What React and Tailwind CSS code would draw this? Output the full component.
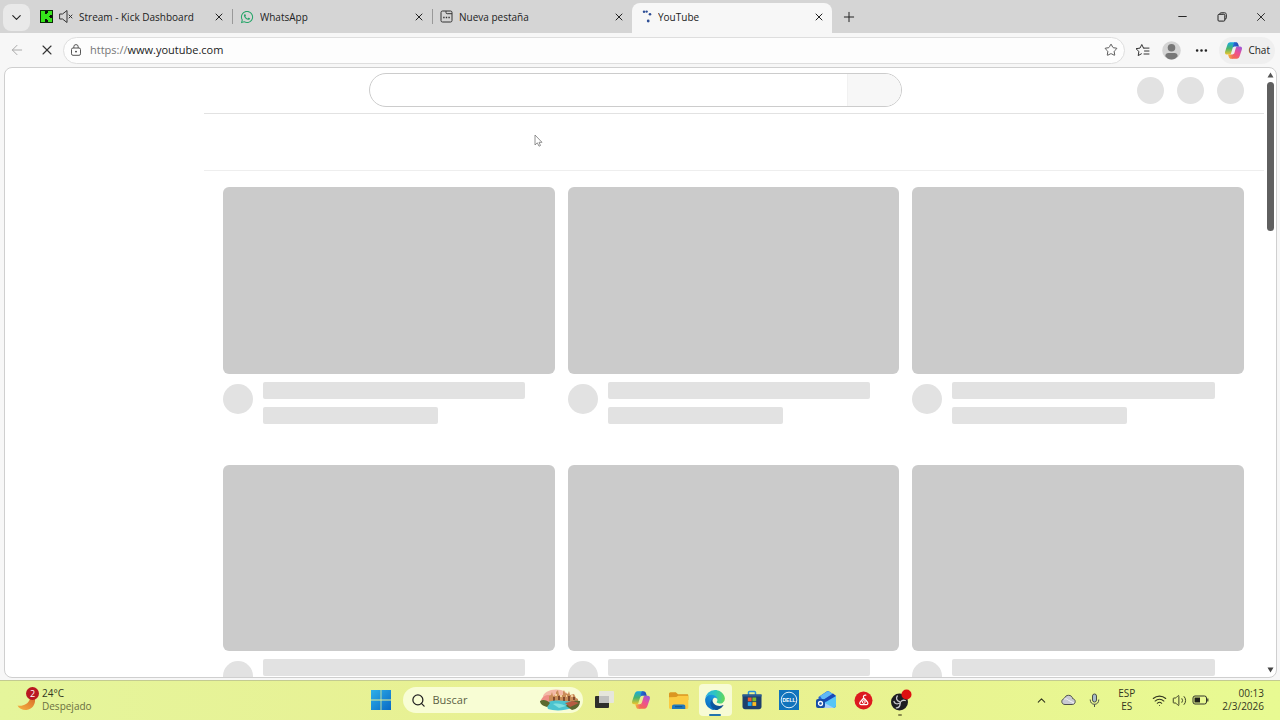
import {
  ChevronDown,
  ChevronUp,
  ArrowLeft,
  X,
  Plus,
  Minus,
  Star,
  Search,
  Wifi,
  Volume2,
  Ellipsis
} from "lucide-react";
import { FaWhatsapp } from "react-icons/fa";

const KickIcon = () => (
  <svg width="13" height="13" viewBox="0 0 13 13" aria-hidden="true">
    <rect width="13" height="13" fill="#35e51a" />
    <path d="M0 0h13v1H0ZM0 12h13v1H0ZM0 0h1v13H0ZM12 0h1v13h-1Z" fill="#0b2a08" />
    <path d="M5 1h3v2H7v1H5ZM5 9h2v1h1v2H5ZM10 5h2v3h-2V7H9V6h1Z" fill="#0b0f0a" />
  </svg>
);

const MutedIcon = () => (
  <svg width="14" height="15" viewBox="0 0 14 15" fill="none" stroke="#333" strokeLinejoin="round" strokeLinecap="round" aria-hidden="true">
    <path d="M1 5h2.500L8 1.500v12L3.500 10H1Z" />
    <path d="m10 6 3 3M13 6l-3 3" />
  </svg>
);

const NewTabIcon = () => (
  <svg width="13" height="13" viewBox="0 0 13 13" fill="none" stroke="#333" aria-hidden="true">
    <rect x="1" y="1" width="11" height="11" rx="1.500" />
    <path d="M6 1.200v1.300c0 .8.4 1.200 1.200 1.200H12" />
    <path d="M3.200 7.500h6.600" strokeWidth="1.300" strokeDasharray="1.4 1.200" />
  </svg>
);

const SpinnerDots = () => (
  <svg width="13" height="13" viewBox="0 0 13 13" fill="#2f4f96" aria-hidden="true">
    <circle cx="5" cy="1.700" r="1.200" />
    <circle cx="7.600" cy="1.600" r="1.200" />
    <circle cx="11" cy="4.200" r="1.300" />
    <circle cx="9.200" cy="11" r="1.400" />
  </svg>
);

const LockIcon = () => (
  <svg width="12" height="12" viewBox="0 0 12 12" fill="none" stroke="#555" aria-hidden="true">
    <rect x="1.500" y="4" width="9" height="7.300" rx="1.500" />
    <path d="M3.800 4V2.800a2.200 2.200 0 0 1 4.400 0V4" />
    <circle cx="6" cy="7.600" r=".9" fill="#333" stroke="none" />
  </svg>
);

const FavoritesIcon = () => (
  <svg width="15" height="15" viewBox="0 0 15 15" fill="none" stroke="#333" strokeLinejoin="round" strokeLinecap="round" aria-hidden="true">
    <path d="M8.800 5.100H8.500L6.800 1.500 5 5.100l-4 .6 2.900 2.800-.7 4.100 3.200-1.800" />
    <path d="M8.800 5.100H14M9.500 8H14M9 11h5" />
  </svg>
);

const RestoreIcon = () => (
  <svg width="10" height="10" viewBox="0 0 10 10" fill="none" stroke="#222" aria-hidden="true">
    <rect x="1" y="2.300" width="6.800" height="6.800" rx="1" />
    <path d="M2.800 2.200C2.800 1.200 3.400.8 4.200.8h3.300C8.700.8 9.300 1.500 9.300 2.600v3.200c0 .9-.5 1.400-1.400 1.400" />
  </svg>
);

const ProfileIcon = () => (
  <svg width="19" height="19" viewBox="0 0 19 19" aria-hidden="true">
    <circle cx="9.500" cy="9.500" r="9.300" fill="#d4d4d4" />
    <circle cx="9.500" cy="6.800" r="3.800" fill="#777" />
    <path d="M3.300 15.200c0-2 1.400-3.200 3.200-3.200h6c1.800 0 3.200 1.200 3.200 3.200-1.500 2-3.700 3.300-6.200 3.300s-4.700-1.300-6.200-3.300Z" fill="#777" />
  </svg>
);

const CopilotIcon = ({ id, size }) => (
  <svg width={size} height={size} viewBox="0 0 20 20" aria-hidden="true">
    <defs>
      <linearGradient id={`${id}-blue`} x1="0" y1="0" x2="1" y2="0">
        <stop offset="0" stopColor="#2472de" />
        <stop offset="1" stopColor="#2446ad" />
      </linearGradient>
      <linearGradient id={`${id}-green`} x1="0.2" y1="0" x2="0.2" y2="1">
        <stop offset="0" stopColor="#16a9e6" />
        <stop offset=".5" stopColor="#48b56c" />
        <stop offset="1" stopColor="#f0c52c" />
      </linearGradient>
      <linearGradient id={`${id}-pink`} x1="0.8" y1="0" x2="0.3" y2="1">
        <stop offset="0" stopColor="#a058d8" />
        <stop offset=".5" stopColor="#ec4f93" />
        <stop offset="1" stopColor="#f56b4a" />
      </linearGradient>
      <linearGradient id={`${id}-warm`} x1="0" y1="0" x2="1" y2="0">
        <stop offset="0" stopColor="#f7b733" />
        <stop offset="1" stopColor="#ee4e6b" />
      </linearGradient>
    </defs>
    <path d="M12.500 1.200H6.700C4.800 1.200 4 2.500 3.400 4.400L1.200 11c-.6 2 .2 3.300 2.100 3.300h2.200c1.400 0 1.900-.8 2.200-2.200l1.600-5.400c.5-1.600 1.200-4.900 3.200-5.500Z" fill={`url(#${id}-green)`} />
    <path d="M7.500 18.800h5.800c1.900 0 2.700-1.300 3.300-3.200L18.800 9c.6-2-.2-3.300-2.100-3.300h-2.200c-1.400 0-1.900.8-2.200 2.200l-1.600 5.400c-.5 1.600-1.200 4.900-3.200 5.500Z" fill={`url(#${id}-pink)`} />
    <path d="M11 1.200h1.500c1.300 0 2 .7 2.400 1.900l.9 2.700h-2.600c-1.600 0-3.200-.3-4.200 1.700C9.500 5 9.700 2.500 11 1.200Z" fill={`url(#${id}-blue)`} />
    <path d="M9 18.800H7.500c-1.300 0-2-.7-2.400-1.900l-.9-2.700h2.600c1.600 0 3.200.3 4.200-1.700-.5 2.500-.7 5-2 6.300Z" fill={`url(#${id}-warm)`} />
  </svg>
);

const WindowsIcon = () => (
  <svg width="20" height="20" viewBox="0 0 20 20" aria-hidden="true">
    <defs>
      <linearGradient id="win" gradientUnits="userSpaceOnUse" x1="0" y1="0" x2="20" y2="20">
        <stop offset="0" stopColor="#2fb0ea" />
        <stop offset="1" stopColor="#0869c4" />
      </linearGradient>
    </defs>
    <path d="M0 0h9.600v9.600H0zM10.400 0H20v9.600h-9.600zM0 10.400h9.600V20H0zM10.400 10.400H20V20h-9.600z" fill="url(#win)" />
  </svg>
);

const CityIcon = () => (
  <svg width="40" height="22" viewBox="0 0 40 22" aria-hidden="true">
    <ellipse cx="16" cy="8" rx="13" ry="7.500" fill="#f3b9a6" />
    <path d="M1 11C3 6 9 5 12 7l4 5-14 3Z" fill="#ef8f86" />
    <path d="M9 12V7l2-1 1-3 1 4 3-1V3l2-2 1 5h4V3l1-2 1 3 3 1 1-3 1 4 4-1 2 4 2 1v4l-12 2Z" fill="#c98d58" />
    <path d="M13 8h2v4h-2zM18 7h2v4h-2zM23 8h2v4h-2zM28 7h2v5h-2zM33 8h2v3h-2z" fill="#7f4b2e" />
    <path d="M15 5h2v2h-2zM20 6h2v2h-2zM26 6h1v2h-1zM31 6h2v2h-2z" fill="#f1d0a0" />
    <path d="M6 14c8-4 18-2 27-1l-1 6c-8 3-18 3-24 1Z" fill="#4bc3cf" />
    <path d="M13 15c5-1 9 0 13 2l-7 2Z" fill="#83e0df" />
    <path d="M0 12c3-2 7-1 10 2l-3 4c-4-1-7-3-7-6ZM26 17c3-5 9-6 14-5 0 5-3 8-8 9Z" fill="#5c6930" />
    <path d="M25 14l8-2 6 2-9 4Z" fill="#b65c41" />
  </svg>
);

const TaskViewIcon = () => (
  <svg width="20" height="20" viewBox="0 0 20 20" aria-hidden="true">
    <rect x="1" y="6" width="14" height="12" rx="1" fill="#2e2e2b" />
    <rect x="5" y="1" width="15" height="12" rx="1" fill="#e5e5e3" opacity=".92" />
    <rect x="5" y="6" width="10" height="7" fill="#c1c1bf" />
  </svg>
);

const FolderIcon = () => (
  <svg width="21" height="19" viewBox="0 0 21 19" aria-hidden="true">
    <path d="M1 3c0-1 .6-1.700 1.600-1.700h5.200L10 3.300h9c.9 0 1.300.5 1.300 1.400V9H1Z" fill="#db9621" />
    <path d="M1 6.200 8.300 6l1.800-1.300H19c.9 0 1.300.5 1.300 1.300v10.600c0 .8-.5 1.300-1.300 1.300H2.300c-.8 0-1.300-.5-1.300-1.300Z" fill="#fbcb42" />
    <path d="M4 18v-2.500c0-1.300.8-2.100 2-2.100h9.300c1.300 0 2 .8 2 2.100V18Z" fill="#2179bd" />
    <path d="M7 15.700h7.300" stroke="#14578e" strokeWidth="1.200" />
  </svg>
);

const EdgeIcon = () => (
  <svg width="20" height="20" viewBox="4 0 257 259" aria-hidden="true">
    <defs>
      <linearGradient id="edge-deep" x1="0.1" y1="0.600" x2="1" y2="0.600">
        <stop offset="0" stopColor="#0c59a4" />
        <stop offset="1" stopColor="#114a8b" />
      </linearGradient>
      <linearGradient id="edge-mid" x1="0.900" y1="0.200" x2="0.300" y2="1">
        <stop offset="0" stopColor="#1b9de2" />
        <stop offset="1" stopColor="#0a6cc0" />
      </linearGradient>
      <linearGradient id="edge-wave" x1="0" y1="0.400" x2="1" y2="0.500">
        <stop offset="0" stopColor="#2aaee6" />
        <stop offset=".5" stopColor="#2fc6bd" />
        <stop offset="1" stopColor="#62d957" />
      </linearGradient>
    </defs>
    <path d="M235.680 195.460a93.730 93.730 0 0 1-10.540 4.710 101.870 101.870 0 0 1-35.900 6.460c-47.320 0-88.540-32.550-88.540-74.320A31.480 31.480 0 0 1 117.130 105c-42.800 1.800-53.800 46.400-53.800 72.530 0 73.880 68.090 81.370 82.760 81.370 7.910 0 19.840-2.300 27-4.560l1.310-.44a128.340 128.340 0 0 0 66.600-52.800 4 4 0 0 0-5.320-5.640Z" fill="url(#edge-deep)" />
    <path d="M110.340 246.340A79.200 79.200 0 0 1 87.600 225a80.720 80.720 0 0 1 29.530-120c3.120-1.470 8.450-4.130 15.540-4a32.350 32.350 0 0 1 25.690 13 31.880 31.880 0 0 1 6.360 18.660c0-.21 24.460-79.600-80-79.600-43.900 0-80 41.660-80 78.210a130.150 130.150 0 0 0 12.110 56 128 128 0 0 0 156.380 67.110 75.550 75.550 0 0 1-62.780-8Z" fill="url(#edge-mid)" />
    <path d="M156.940 153.780c-.81 1.050-3.300 2.500-3.300 5.660 0 2.610 1.700 5.120 4.720 7.230 14.380 10 41.490 8.680 41.560 8.680a59.560 59.560 0 0 0 30.270-8.350 61.380 61.380 0 0 0 30.430-52.880c.26-22.410-8-37.310-11.340-43.910C228.090 28.760 182.350.28 132.640.28a128 128 0 0 0-128 126.200c.48-36.540 36.800-66.050 80-66.050 3.500 0 23.460.34 42 10.070 16.340 8.580 24.900 18.940 30.850 29.210 6.180 10.670 7.280 24.150 7.280 29.520s-2.740 13.330-7.830 19.950Z" fill="url(#edge-wave)" />
  </svg>
);

const StoreIcon = () => (
  <svg width="20" height="20" viewBox="0 0 20 20" aria-hidden="true">
    <path d="M6.500 5V2.600c0-.7.400-1.100 1.100-1.100h4.800c.7 0 1.100.4 1.100 1.100V5" fill="none" stroke="#2493dd" strokeWidth="1.500" />
    <path d="M.5 4.500h19v12.200c0 1.500-1 2.500-2.500 2.500H3c-1.500 0-2.500-1-2.500-2.500Z" fill="#1d3f6c" />
    <path d="M.5 4.500h19v2H.5z" fill="#2a5d94" />
    <path d="M5.800 7.500h3.800v3.800H5.800z" fill="#f05a30" />
    <path d="M10.400 7.500h3.800v3.800h-3.800z" fill="#7dbb2b" />
    <path d="M5.800 12.100h3.800v3.800H5.800z" fill="#21a5ec" />
    <path d="M10.400 12.100h3.800v3.800h-3.800z" fill="#fdbb22" />
  </svg>
);

const DellIcon = () => (
  <svg width="20" height="20" viewBox="0 0 20 20" aria-hidden="true">
    <rect width="20" height="20" fill="#1173bc" />
    <circle cx="10" cy="10" r="7.800" fill="none" stroke="#d9ecf9" />
    <text x="10" y="12" textAnchor="middle" fontSize="5" fontWeight="700" fill="#fff" fontFamily="Liberation Sans, sans-serif">
      DELL
    </text>
  </svg>
);

const OutlookIcon = () => (
  <svg width="21" height="20" viewBox="0 0 21 20" aria-hidden="true">
    <path d="M2.500 7 11 1.300c.6-.4 1.200-.4 1.800 0L20 6v9c0 1.800-1 3-3 3H6c-2 0-3.500-1.200-3.500-3Z" fill="#2464cf" />
    <path d="M4 6 12 1l5 3-10 6.500Z" fill="#5fb8f5" />
    <path d="M7 10 17 3.500 20 6l-9 6.500Z" fill="#1b49b7" />
    <path d="m8 13 12-7v9c0 1.800-1 3-3 3H8Z" fill="#57c5f6" />
    <path d="m5 11 13 7H7Z" fill="#a9cff9" />
    <rect x="0" y="9" width="9" height="9" rx="2" fill="#174ea6" />
    <circle cx="4.500" cy="13.500" r="2" fill="none" stroke="#fff" strokeWidth="1.300" />
  </svg>
);

const RedAppIcon = () => (
  <svg width="19" height="19" viewBox="0 0 19 19" aria-hidden="true">
    <circle cx="9.500" cy="9.500" r="9" fill="#dc1a1f" />
    <path d="M11.800 4.200c-1.700-.2-2.600.7-2.300 2l.8 2M9.300 7.500 6.200 11c-1 1.300-.4 2.700 1.200 2.700h4.800c1.600 0 2.200-1.400 1.200-2.700l-2.600-3" fill="none" stroke="#fff" strokeWidth="1.200" strokeLinecap="round" />
    <circle cx="9.800" cy="11" r="1.400" fill="none" stroke="#fff" />
  </svg>
);

const ObsIcon = () => (
  <svg width="23" height="23" viewBox="0 0 23 23" aria-hidden="true">
    <circle cx="10.500" cy="13" r="8.500" fill="#1d1d21" />
    <g fill="none" stroke="#c9c9cd" strokeWidth="1.300" strokeLinecap="round">
      <path d="M8.300 7c-1.500 2-.8 4.800 2.200 5.700" />
      <path d="M16.300 11.500c-2.500-.8-5 .5-5.300 3.300" />
      <path d="M7.300 18.800c2.600.1 4.400-2 3.500-4.700M5 12.500c.6 1.800 2.500 2.800 4.500 2" />
    </g>
    <circle cx="17.500" cy="5.500" r="5" fill="#dd1111" />
  </svg>
);

const MoonIcon = () => (
  <svg width="19" height="13" viewBox="0 0 19 13" aria-hidden="true">
    <defs>
      <linearGradient id="moon" x1="0" y1="1" x2="1" y2="0">
        <stop offset="0" stopColor="#f6b342" />
        <stop offset="1" stopColor="#d9702a" />
      </linearGradient>
    </defs>
    <path d="M.5 7.500C5.500 8.500 11 6.500 13 1h5c.6 5.500-3 10.500-8.500 11-4 .3-7.500-1.500-9-4.500Z" fill="url(#moon)" />
  </svg>
);

const CloudIcon = () => (
  <svg width="15" height="12" viewBox="0 0 15 12" aria-hidden="true">
    <path d="M4 10.500c-1.900 0-3.200-1.200-3.200-3 0-1.500 1-2.600 2.500-2.900C3.900 2.500 5.500 1.300 7.500 1.300c2.200 0 3.800 1.300 4.200 3.400 1.500.2 2.500 1.300 2.500 2.800 0 1.800-1.200 3-3 3Z" fill="#c9cad3" stroke="#4d4f4c" />
    <path d="M3 5c2-.6 3.500.2 4.500 1.300L13 9" fill="none" stroke="#f5f5f7" />
  </svg>
);

const MicIcon = () => (
  <svg width="11" height="15" viewBox="0 0 11 15" fill="none" stroke="#4b5048" aria-hidden="true">
    <rect x="3.500" y="1" width="4" height="8" rx="2" fill="#a7bcc8" />
    <path d="M1.200 6.500c0 3 1.700 4.800 4.300 4.800s4.300-1.800 4.300-4.800M5.500 11.300V14" />
  </svg>
);

const BatteryIcon = () => (
  <svg width="17" height="10" viewBox="0 0 17 10" aria-hidden="true">
    <rect x="1" y="1" width="13.500" height="8" rx="2" fill="none" stroke="#32352a" />
    <rect x="2.500" y="2.500" width="5.500" height="5" fill="#1f211a" />
    <path d="M15.800 3.500v3" stroke="#32352a" strokeWidth="1.200" />
  </svg>
);

const Pointer = () => (
  <svg width="9" height="13" viewBox="0 0 9 13" className="absolute top-[134px] left-[534px]" aria-hidden="true">
    <path d="M1 1v10l2.300-2.200L5 12.200l1.500-.7L5 8.300h3Z" fill="#fff" stroke="#777" strokeWidth=".8" />
  </svg>
);

const tabs = [
  {
    title: "Stream - Kick Dashboard",
    icon: (
      <>
        <KickIcon />
        <MutedIcon />
      </>
    )
  },
  { title: "WhatsApp", icon: <FaWhatsapp size={14} className="text-[#25a568]" /> },
  { title: "Nueva pestaña", icon: <NewTabIcon /> },
  { title: "YouTube", icon: <SpinnerDots />, active: true }
];

const Tab = ({ title, icon, active }) => (
  <div
    className={`flex min-w-0 flex-1 items-center gap-[6px] px-[7px] ${
      active ? "mt-[3px] max-w-[200px] rounded-t-lg bg-[#f7f7f7] pb-[3px]" : "max-w-[199px]"
    }`}
  >
    {icon}
    <span className="min-w-0 flex-1 truncate text-[10px] leading-4">{title}</span>
    <button aria-label={`Cerrar ${title}`}>
      <X size={12} strokeWidth={2} />
    </button>
  </div>
);

const TabStrip = () => (
  <header className="flex h-[33px] shrink-0 bg-[#d5d5d5] pl-[3px]">
    <button aria-label="Acciones de pestaña" className="mt-1 mr-[3px] flex size-[27px] shrink-0 items-center justify-center rounded-lg bg-[#e9e9e9]">
      <ChevronDown size={15} strokeWidth={1.8} />
    </button>
    <div className="flex min-w-0 flex-1">
      {tabs.map((tab, i) => (
        <div key={tab.title} className="contents">
          {(i === 1 || i === 2) && <span className="my-[9px] w-px shrink-0 bg-[#999]" />}
          <Tab {...tab} />
        </div>
      ))}
      <button aria-label="Nueva pestaña" className="flex w-[33px] items-center justify-center">
        <Plus size={16} strokeWidth={1.5} />
      </button>
    </div>
    <div className="flex">
      <button aria-label="Minimizar" className="flex w-[39px] items-center justify-center">
        <Minus size={13} strokeWidth={1.8} />
      </button>
      <button aria-label="Restaurar" className="flex w-[39px] items-center justify-center">
        <RestoreIcon />
      </button>
      <button aria-label="Cerrar" className="flex w-[39px] items-center justify-center">
        <X size={14} strokeWidth={1.6} />
      </button>
    </div>
  </header>
);

const Toolbar = () => (
  <div className="flex h-[34px] shrink-0 items-center px-[9px]">
    <button aria-label="Atrás" className="mr-[14px] text-[#aaa]">
      <ArrowLeft size={16} strokeWidth={1.5} />
    </button>
    <button aria-label="Detener" className="mr-2 text-[#333]">
      <X size={16} strokeWidth={1.6} />
    </button>
    <div className="flex h-[27px] flex-1 items-center rounded-full border border-[#dedede] bg-[#fdfdfd] px-[6px]">
      <LockIcon />
      <div className="ml-2 flex-1 text-[11px] leading-4">
        <span className="text-[#767676]">https://</span>www.youtube.com
      </div>
      <button aria-label="Agregar a favoritos" className="text-[#444]">
        <Star size={14} strokeWidth={1.5} />
      </button>
    </div>
    <button aria-label="Favoritos" className="ml-[10px]">
      <FavoritesIcon />
    </button>
    <button aria-label="Perfil" className="ml-3">
      <ProfileIcon />
    </button>
    <button aria-label="Más" className="ml-[13px]">
      <Ellipsis size={15} strokeWidth={2.2} />
    </button>
    <button className="ml-[10px] -mr-1 flex h-[27px] items-center gap-[5px] rounded-full bg-[#efefef] px-[5px] text-[10px]">
      <CopilotIcon id="chat" size={19} />
      Chat
    </button>
  </div>
);

const SkeletonCard = () => (
  <article>
    <div className="aspect-video rounded-md bg-[#cbcbcb]" />
    <div className="flex pt-2">
      <div className="mt-[2px] mr-[10px] size-[30px] shrink-0 rounded-full bg-[#e2e2e2]" />
      <div className="flex-1 space-y-2">
        <div className="h-[17px] w-[90%] rounded-xs bg-[#e2e2e2]" />
        <div className="h-[17px] w-[60%] rounded-xs bg-[#e2e2e2]" />
      </div>
    </div>
  </article>
);

const YouTubePage = () => (
  <div className="flex min-w-0 flex-1 flex-col overflow-hidden">
    <div className="grid h-[45px] shrink-0 grid-cols-[1fr_minmax(0,533px)_1fr] items-center pb-px pl-px">
      <div />
      <form className="flex h-[34px] overflow-hidden rounded-full border border-[#ccc]">
        <input aria-label="Buscar en YouTube" className="min-w-0 flex-1 px-4 text-sm outline-none" />
        <button type="button" aria-label="Buscar" className="w-[54px] border-l border-[#f1f1f1] bg-[#f7f7f7]" />
      </form>
      <div className="flex justify-end gap-[13px] pr-5">
        {[1, 2, 3].map((n) => (
          <div key={n} className="size-[27px] rounded-full bg-[#e2e2e2]" />
        ))}
      </div>
    </div>
    <div className="flex min-h-0 flex-1">
      <aside className="w-[199px] shrink-0" />
      <main className="min-w-0 flex-1 overflow-hidden border-t border-[#e2e2e2]">
        <div className="h-[57px] border-b border-[#eee]" />
        <div className="grid grid-cols-3 gap-x-[13px] gap-y-[41px] pt-4 pr-5 pl-[19px]">
          {Array.from({ length: 6 }, (_, i) => (
            <SkeletonCard key={i} />
          ))}
        </div>
      </main>
    </div>
  </div>
);

const Scrollbar = () => (
  <div className="flex w-3 shrink-0 flex-col items-center justify-between py-1">
    <div className="flex flex-1 flex-col items-center">
      <svg width="7" height="6" viewBox="0 0 7 6" fill="#555" aria-hidden="true">
        <path d="M3.500.5 6.500 5.500h-6Z" />
      </svg>
      <div className="mt-1 h-1/4 w-[7px] rounded-full bg-[#5f5f5f]" />
    </div>
    <svg width="7" height="6" viewBox="0 0 7 6" fill="#444" aria-hidden="true">
      <path d="M3.500 5.500.5.5h6Z" />
    </svg>
  </div>
);

const apps = [
  { name: "Vista de tareas", icon: <TaskViewIcon /> },
  { name: "Copilot", icon: <CopilotIcon id="task" size={20} /> },
  { name: "Explorador de archivos", icon: <FolderIcon /> },
  { name: "Microsoft Edge", icon: <EdgeIcon />, active: true },
  { name: "Microsoft Store", icon: <StoreIcon /> },
  { name: "Dell", icon: <DellIcon /> },
  { name: "Outlook", icon: <OutlookIcon /> },
  { name: "Música", icon: <RedAppIcon /> },
  { name: "OBS Studio", icon: <ObsIcon />, running: true }
];

const Taskbar = () => (
  <footer className="grid h-10 shrink-0 grid-cols-[1fr_auto_1fr] items-center border-t border-[#c3cb91] bg-linear-to-r from-[#e5f59b] via-[#e9ef90] to-[#e8fa92] pb-px text-[#33371f]">
    <div className="flex items-center pl-[17px]">
      <div className="relative mr-[6px] pt-2">
        <MoonIcon />
        <span className="absolute -top-[3px] left-[9px] flex size-[13px] items-center justify-center rounded-full bg-[#b91822] text-[9px] leading-none text-white">
          2
        </span>
      </div>
      <div className="text-[10px] leading-[13px]">
        <div>24°C</div>
        <div className="text-[#6a7040]">Despejado</div>
      </div>
    </div>
    <div className="flex items-center gap-[3px] pl-px">
      <button aria-label="Inicio" className="flex w-[37px] justify-center">
        <WindowsIcon />
      </button>
      <label className="flex h-[26px] w-[180px] items-center rounded-full bg-[#f8fdd4] pr-[3px] pl-2">
        <Search size={15} strokeWidth={2} className="shrink-0 text-[#222]" />
        <input
          aria-label="Buscar"
          placeholder="Buscar"
          className="ml-[7px] min-w-0 flex-1 text-[11px] outline-none placeholder:text-[#5c5f45]"
        />
        <CityIcon />
      </label>
      <div className="flex">
        {apps.map(({ name, icon, active, running }) => (
          <button key={name} aria-label={name} className="relative flex h-8 w-[37px] items-center justify-center">
            {active && <span className="absolute inset-x-[2px] inset-y-0 rounded-sm bg-[#f7fbd5]" />}
            <span className="relative">{icon}</span>
            {active && <span className="absolute bottom-0 h-[2px] w-3 rounded-full bg-[#2274ad]" />}
            {running && <span className="absolute bottom-0 h-[2px] w-1 rounded-full bg-[#87894c]" />}
          </button>
        ))}
      </div>
    </div>
    <div className="flex items-center justify-end pr-4 text-[10px] leading-[13px]">
      <ChevronUp size={13} strokeWidth={2} />
      <span className="ml-[13px]">
        <CloudIcon />
      </span>
      <span className="ml-[13px]">
        <MicIcon />
      </span>
      <div className="ml-[18px] text-center">
        <div>ESP</div>
        <div>ES</div>
      </div>
      <div className="ml-[17px] flex items-center gap-[5px]">
        <Wifi size={15} strokeWidth={1.7} />
        <Volume2 size={15} strokeWidth={1.5} />
        <BatteryIcon />
      </div>
      <div className="ml-[13px] text-right">
        <div>00:13</div>
        <div>2/3/2026</div>
      </div>
    </div>
  </footer>
);

export default function App() {
  return (
    <div className="relative flex h-screen flex-col overflow-hidden bg-[#f7f7f7] font-['Open_Sans','Noto_Sans',sans-serif] text-[#222]">
      <TabStrip />
      <Toolbar />
      <div className="mr-[3px] mb-[2px] ml-1 flex min-h-0 flex-1 overflow-hidden rounded-lg border border-[#cfcfcf] bg-white">
        <YouTubePage />
        <Scrollbar />
      </div>
      <Taskbar />
      <Pointer />
    </div>
  );
}
